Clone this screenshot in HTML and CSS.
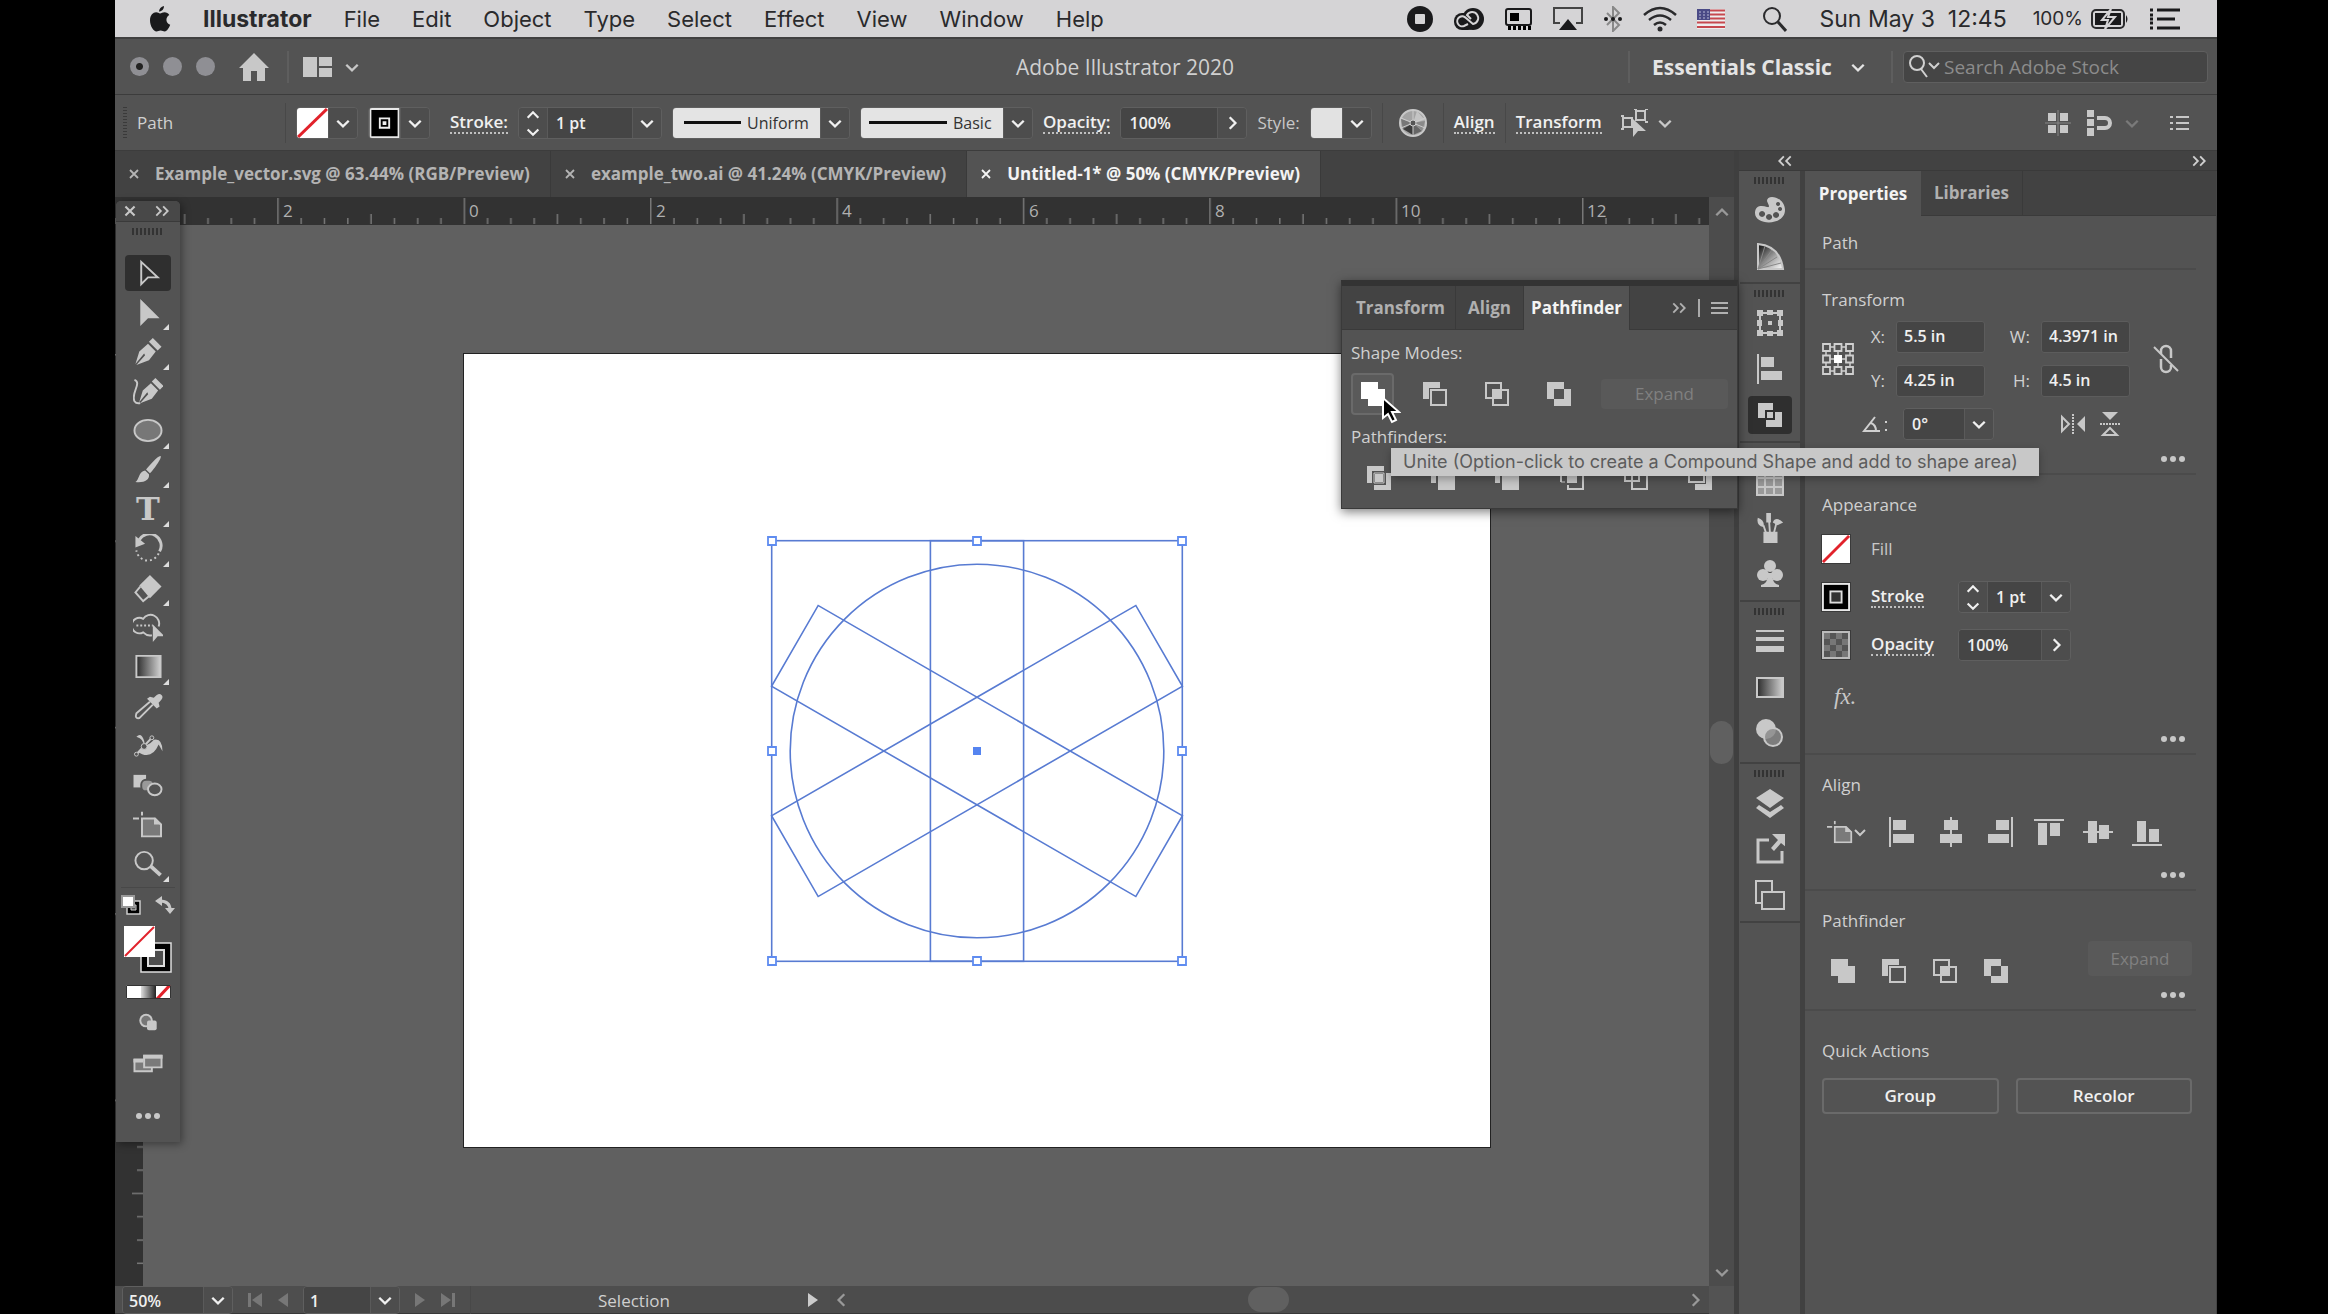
FILE: index.html
```html
<!DOCTYPE html>
<html lang="en">
<head>
<meta charset="utf-8">
<title>Adobe Illustrator 2020</title>
<link rel="stylesheet" href="styles.css">
</head>
<body>
<svg class="sprite" aria-hidden="true">
  <defs>
    <linearGradient id="grad"><stop offset="0" stop-color="#2c2c2c"/><stop offset="1" stop-color="#d0d0d0"/></linearGradient>
    <linearGradient id="grad-rev"><stop offset="0" stop-color="#ddd"/><stop offset="1" stop-color="#222"/></linearGradient>
    <linearGradient id="fan" x1="0" y1="0" x2="1" y2="1"><stop offset=".1" stop-color="#222"/><stop offset=".6" stop-color="#aaa"/><stop offset="1" stop-color="#fff"/></linearGradient>
  </defs>
  <symbol id="down" viewBox="0 0 14 14"><path d="M2 5l5 5 5-5" fill="none" stroke="currentColor" stroke-width="2"/></symbol>
  <symbol id="up" viewBox="0 0 14 14"><path d="M2 9l5-5 5 5" fill="none" stroke="currentColor" stroke-width="2"/></symbol>
  <symbol id="right" viewBox="0 0 14 14"><path d="M5 2l5 5-5 5" fill="none" stroke="currentColor" stroke-width="2"/></symbol>
  <symbol id="left" viewBox="0 0 14 14"><path d="M9 2L4 7l5 5" fill="none" stroke="currentColor" stroke-width="2"/></symbol>
  <symbol id="steps" viewBox="0 0 14 28"><path d="M2 9l5-5 5 5M2 20l5 5 5-5" fill="none" stroke="currentColor" stroke-width="2"/></symbol>
  <symbol id="more-right" viewBox="0 0 14 14"><path d="M2 3l4 4-4 4M8 3l4 4-4 4" fill="none" stroke="currentColor" stroke-width="1.600"/></symbol>
  <symbol id="more-left" viewBox="0 0 14 14"><path d="M6 3L2 7l4 4M12 3L8 7l4 4" fill="none" stroke="currentColor" stroke-width="1.600"/></symbol>
  <symbol id="close" viewBox="0 0 14 14"><path d="M3 3l8 8M11 3l-8 8" fill="none" stroke="currentColor" stroke-width="1.800"/></symbol>
  <symbol id="dots" viewBox="0 0 26 8"><g fill="currentColor"><circle cx="4" cy="4" r="3"/><circle cx="13" cy="4" r="3"/><circle cx="22" cy="4" r="3"/></g></symbol>
  <symbol id="none" viewBox="0 0 30 30"><path fill="#fff" d="M0 0h30v30H0z"/><path d="M1 29L29 1" stroke="#e1222b" stroke-width="3"/></symbol>
  <symbol id="stroke-swatch" viewBox="0 0 30 30"><path fill="#e8e8e8" d="M0 0h30v30H0z"/><path d="M2 2h26v26H2z"/><path d="M8 8h14v14H8z" fill="#ddd"/><path d="M10 10h10v10H10z" fill="#333"/></symbol>
  <symbol id="stroke-mini" viewBox="0 0 32 32"><path fill="#e8e8e8" d="M0 0h32v32H0z"/><path d="M2 2h28v28H2z"/><path d="M11 11h10v10H11z" stroke="#eee" stroke-width="2"/><path d="M14 14h4v4h-4z" fill="#eee"/></symbol>
  <symbol id="pf-unite" viewBox="0 0 24 24"><path fill="currentColor" d="M0 0h17v7h7v17H7v-7H0z"/></symbol>
  <symbol id="pf-minus" viewBox="0 0 24 24"><path fill="currentColor" d="M0 0h17v6H6v11H0z"/><path fill="none" stroke="currentColor" stroke-width="2" d="M8 8h15v15H8z"/></symbol>
  <symbol id="pf-intersect" viewBox="0 0 24 24"><path fill="currentColor" d="M8 8h8v8H8z"/><path fill="none" stroke="currentColor" stroke-width="2" d="M1 1h15v15H1zM8 8h15v15H8z"/></symbol>
  <symbol id="pf-exclude" viewBox="0 0 24 24"><path fill="currentColor" fill-rule="evenodd" d="M0 0h17v7h7v17H7v-7H0zM7 7v10h10V7z"/></symbol>
  <symbol id="pf-divide" viewBox="0 0 24 24"><path fill="currentColor" d="M0 0h17v5H5v12H0z"/><path fill="currentColor" d="M8 8h8v8H8z"/><path fill="currentColor" d="M19 7h5v17H7v-5h12z"/><path d="M7 7h10v10H7z" fill="none" stroke="currentColor"/></symbol>
  <symbol id="pf-trim" viewBox="0 0 24 24"><path fill="currentColor" d="M0 0h17v5H5v12H0zM7 7h17v17H7z"/></symbol>
  <symbol id="pf-crop" viewBox="0 0 24 24"><path fill="currentColor" d="M7 7h10v10H7z"/><path fill="none" stroke="currentColor" stroke-width="2" d="M1 16V1h15M23 8v15H8v-4M19 8h4"/><path fill="none" stroke="currentColor" d="M1 16h4"/></symbol>
  <symbol id="pf-outline" viewBox="0 0 24 24"><path fill="none" stroke="currentColor" stroke-width="2" d="M1 1h14v14H1zM8 8h15v15H8z"/></symbol>
  <symbol id="pf-back" viewBox="0 0 24 24"><path fill="none" stroke="currentColor" stroke-width="2" d="M1 1h15v15H1z"/><path fill="currentColor" d="M18 7h6v17H7v-6h11z"/></symbol>
  <symbol id="artboard" viewBox="0 0 30 26"><path d="M9 7h13l6 6v12H9z" fill="#7a7a7a" stroke="currentColor" stroke-width="2"/><path d="M21 6v7h8z" fill="currentColor"/><path d="M0 7h6M9 0v4" stroke="currentColor" stroke-width="2"/></symbol>
  <symbol id="al-left" viewBox="0 0 30 30"><path fill="currentColor" d="M2 0h2v30H2zM6 3h13v10H6zM6 17h21v9H6z"/></symbol>
  <symbol id="al-center" viewBox="0 0 30 30"><path fill="currentColor" d="M14 0h2v30h-2zM8 3h14v10H8zM4 17h22v9H4z"/></symbol>
  <symbol id="al-right" viewBox="0 0 30 30"><path fill="currentColor" d="M26 0h2v30h-2zM11 3h13v10H11zM3 17h21v9H3z"/></symbol>
  <symbol id="al-top" viewBox="0 0 30 30"><path fill="currentColor" d="M0 2h30v2H0zM4 6h9v22H4zM16 6h10v13H16z"/></symbol>
  <symbol id="al-middle" viewBox="0 0 30 30"><path fill="currentColor" d="M0 14h30v2H0zM5 4h9v22H5zM16 8h10v14H16z"/></symbol>
  <symbol id="al-bottom" viewBox="0 0 30 30"><path fill="currentColor" d="M0 27h30v2H0zM5 4h9v21H5zM17 12h10v13H17z"/></symbol>
  <symbol id="arrow" viewBox="0 0 30 30"><path d="M7 1v28l8-8h12z" fill="currentColor"/></symbol>
  <symbol id="nib" viewBox="0 0 30 30"><path d="M2 28L6 15l9-8 8 8-7 9-13 5 9-10-1-2z" fill="currentColor"/><path d="M16 5l4-4 9 9-4 4z" fill="currentColor"/></symbol>
</svg>

<div class="screen">
  <header class="menubar">
    <svg class="apple" viewBox="0 0 22 26" aria-label="Apple"><path d="M15 0c0 3-2 5.500-5 5.500C10 3 12 .5 15 0zM11 7.500c1.500 0 2.500-1.200 4.500-1.200 2 0 3.800 1 4.800 2.700-4.300 2.600-3.500 8.300.9 9.800-1.200 3.200-3.300 6.700-5.400 6.700-1.700 0-2.300-1-4.200-1s-2.600 1-4.100 1C4.500 25.500 1 20 1 14.500 1 9 4.200 6.300 7.100 6.300c1.900 0 2.900 1.200 3.900 1.200z" fill="#1a1a1c"/></svg>
    <nav class="menus">
      <button class="menu app-name">Illustrator</button><button class="menu">File</button><button class="menu">Edit</button><button class="menu">Object</button><button class="menu">Type</button><button class="menu">Select</button><button class="menu">Effect</button><button class="menu">View</button><button class="menu">Window</button><button class="menu">Help</button>
    </nav>
    <div class="extras">
      <svg width="26" height="26" viewBox="0 0 26 26"><circle cx="13" cy="13" r="13" fill="#1a1a1c"/><rect x="8" y="8" width="10" height="10" rx="1" fill="#d5d4d6"/></svg>
      <svg width="32" height="24" viewBox="0 0 32 24"><rect x="1" y="6" width="22" height="17" rx="8" fill="#1a1a1c"/><circle cx="20" cy="12" r="11" fill="#1a1a1c"/><path d="M15 17l-4 2a5 5 0 1 1 2-8l7 6a6 6 0 1 0-6-9l4 4" fill="none" stroke="#d5d4d6" stroke-width="2"/></svg>
      <svg width="28" height="22" viewBox="0 0 28 22"><rect x="1" y="1" width="25" height="16" rx="2" fill="none" stroke="#1a1a1c" stroke-width="2"/><path d="M5 5h9v8H5zM3 18h3v4H3zM8 18h3v4H8zM13 18h3v4h-3zM18 18h3v4h-3zM23 18h3v4h-3z"/></svg>
      <svg width="30" height="24" viewBox="0 0 30 24"><path d="M7 16H1V1h28v15h-6" fill="none" stroke="#444" stroke-width="2"/><path d="M6 23l9-11 9 11z" fill="#1a1a1c"/></svg>
      <svg width="20" height="26" viewBox="0 0 20 26"><path d="M4 7l12 12-6 6V1l6 6L4 19" fill="none" stroke="#888" stroke-width="2"/><g fill="#1a1a1c"><circle cx="3" cy="13" r="2"/><circle cx="10" cy="13" r="2"/><circle cx="17" cy="13" r="2"/></g></svg>
      <svg width="34" height="26" viewBox="0 0 34 26"><g fill="none" stroke="#2a2a2c" stroke-width="2.500"><path d="M1 9q16-14 32 0M6 14q11-9 22 0M11 19q6-5 12 0"/></g><circle cx="17" cy="23" r="2.500" fill="#2a2a2c"/></svg>
      <svg width="28" height="20" viewBox="0 0 28 20"><path fill="#eee" d="M0 0h28v20H0z"/><path d="M0 1.500h28M0 5.500h28M0 9.500h28M0 13.500h28M0 18h28" stroke="#c6484e" stroke-width="2"/><path fill="#4a4a86" d="M0 0h13v11H0z"/><path d="M2 3h10M2 6h10M2 9h10" stroke="#b9b9d6" stroke-dasharray="2 2"/></svg>
      <svg class="spot" width="26" height="26" viewBox="0 0 26 26"><circle cx="11" cy="10" r="8" fill="none" stroke="#2a2a2c" stroke-width="2"/><path d="M17 16l8 9" stroke="#2a2a2c" stroke-width="3"/></svg>
      <time class="clock">Sun May 3&nbsp; 12:45</time>
      <span class="charge">100%</span>
      <svg class="battery" width="38" height="20" viewBox="0 0 38 20"><rect x="1" y="1" width="32" height="18" rx="4" fill="none" stroke="#2a2a2c" stroke-width="2"/><rect x="4" y="4" width="26" height="12" fill="#1a1a1c"/><path d="M35 6q3 4 0 8z" fill="#1a1a1c"/><path d="M20 0l-9 11h6l-3 9 10-12h-7z" fill="#1a1a1c" stroke="#d5d4d6" stroke-width="2"/></svg>
      <svg width="32" height="24" viewBox="0 0 32 24"><path d="M8 3h23M8 12h18M8 21h23M1 3h3M1 8h3M1 12h3M1 16h3M1 21h3" stroke="#1a1a1c" stroke-width="3"/></svg>
    </div>
  </header>

  <div class="titlebar">
    <div class="title-left">
      <div class="lights"><button class="light edited" aria-label="Close window"></button><button class="light" aria-label="Minimize"></button><button class="light" aria-label="Zoom window"></button></div>
      <button class="icon" aria-label="Home"><svg width="30" height="28" viewBox="0 0 30 28"><path d="M15 0l15 15h-4v13h-8v-10h-6v10H4V15H0z" fill="currentColor"/></svg></button>
      <span class="sep"></span>
      <button class="icon arrange" aria-label="Arrange documents"><svg width="29" height="20" viewBox="0 0 29 20"><path d="M0 0h14v20H0zM16 0h13v9H16zM16 11h13v9H16z" fill="currentColor"/></svg><svg class="chev"><use href="#down"/></svg></button>
    </div>
    <h1 class="title">Adobe Illustrator 2020</h1>
    <div class="title-right">
      <span class="sep"></span>
      <div class="workspace"><select aria-label="Workspace"><option>Essentials Classic</option></select><svg class="chev"><use href="#down"/></svg></div>
      <span class="sep"></span>
      <label class="stock"><svg width="34" height="26" viewBox="0 0 34 26"><circle cx="9" cy="9" r="7" fill="none" stroke="currentColor" stroke-width="2"/><path d="M13 15l6 8M21 9l5 5 5-5" fill="none" stroke="currentColor" stroke-width="2"/></svg><input type="search" placeholder="Search Adobe Stock" aria-label="Search Adobe Stock"></label>
    </div>
  </div>

  <div class="controlbar">
    <span class="vgrip"></span>
    <span class="sel-kind">Path</span>
    <span class="sep dark"></span>
    <div class="combo"><button class="swatch" aria-label="Fill"><svg preserveAspectRatio="none" viewBox="0 0 30 30"><use href="#none"/></svg></button><button class="drop" aria-label="Fill options"><svg class="chev"><use href="#down"/></svg></button></div>
    <div class="combo"><button class="swatch" aria-label="Stroke"><svg viewBox="0 0 32 32"><use href="#stroke-mini"/></svg></button><button class="drop" aria-label="Stroke options"><svg class="chev"><use href="#down"/></svg></button></div>
    <label class="link first" for="stroke-w">Stroke:</label>
    <div class="combo"><button class="drop" aria-label="Step stroke"><svg class="steps"><use href="#steps"/></svg></button><input id="stroke-w" class="w84" value="1 pt"><button class="drop" aria-label="Stroke presets"><svg class="chev"><use href="#down"/></svg></button></div>
    <div class="combo"><select class="profile" aria-label="Width profile"><option>Uniform</option></select><span class="drop"><svg class="chev"><use href="#down"/></svg></span></div>
    <div class="combo"><select class="profile basic" aria-label="Brush"><option>Basic</option></select><span class="drop"><svg class="chev"><use href="#down"/></svg></span></div>
    <label class="link" for="opac">Opacity:</label>
    <div class="combo"><input id="opac" class="w96" value="100%"><button class="drop" aria-label="Opacity slider"><svg class="chev"><use href="#right"/></svg></button></div>
    <span class="plain">Style:</span>
    <div class="combo"><button class="swatch blank" aria-label="Style"></button><button class="drop" aria-label="Style options"><svg class="chev"><use href="#down"/></svg></button></div>
    <span class="sep dark"></span>
    <button class="icon wheel" aria-label="Recolor artwork"><svg width="28" height="28" viewBox="0 0 28 28"><circle cx="14" cy="14" r="13" fill="#a4a4a4" stroke="#c8c8c8" stroke-width="2"/><path d="M14 14L2 10l2 10z" fill="#777"/><path d="M14 14L4 20l10 6z" fill="#3c3c3c"/><path d="M14 14V26l9-4z" fill="#666"/><path d="M14 14l9 8 3-10z" fill="#8a8a8a"/><path d="M14 14l12-3-8-9z" fill="#c4c4c4"/><path d="M14 1v26M2 9l24 10M2 19L26 9" stroke="#ccc"/><circle cx="14" cy="14" r="3" fill="#555" stroke="#ccc"/></svg></button>
    <span class="sep dark"></span>
    <a class="link" href="#align">Align</a>
    <span class="sep dark"></span>
    <a class="link" href="#transform">Transform</a>
    <button class="icon similar" aria-label="Select similar"><svg width="28" height="28" viewBox="0 0 28 28"><path d="M2 9h9v9H2zM15 2h9v9h-9z" fill="none" stroke="currentColor" stroke-width="2"/><path d="M0 7h3M0 20h3M13 0h3M24 0h3M24 13h3" stroke="currentColor" stroke-width="2"/><path d="M12 10v18l5-6h8z" fill="currentColor"/></svg><svg class="chev"><use href="#down"/></svg></button>
    <div class="bar-end">
      <button class="icon" aria-label="Snap to grid"><svg width="26" height="26" viewBox="0 0 26 26"><path d="M3 3h8v8H3zM15 3h8v8h-8zM3 15h8v8H3zM15 15h8v8h-8z" fill="currentColor"/><path d="M13 0v26M0 13h26" stroke="#888"/></svg></button>
      <button class="icon magnet" aria-label="Snap to point"><svg width="25" height="26" viewBox="0 0 25 26"><path d="M0 0h7v7H0zM0 9h7v7H0zM0 18h7v8H0z" fill="currentColor"/><path d="M10 8h8a5 5 0 0 1 0 10h-8" fill="none" stroke="currentColor" stroke-width="4"/></svg><svg class="chev faint"><use href="#down"/></svg></button>
      <button class="icon" aria-label="Panel menu"><svg width="19" height="18" viewBox="0 0 19 18"><path d="M6 3h13M6 9h13M6 15h13M0 3h3M0 9h3M0 15h3" stroke="currentColor" stroke-width="2"/></svg></button>
    </div>
  </div>

  <div class="work">
    <main class="document">
      <div class="tabs" role="tablist">
        <div class="tab"><button class="x" aria-label="Close"><svg><use href="#close"/></svg></button><button role="tab" class="name">Example_vector.svg @ 63.44% (RGB/Preview)</button></div>
        <div class="tab"><button class="x" aria-label="Close"><svg><use href="#close"/></svg></button><button role="tab" class="name">example_two.ai @ 41.24% (CMYK/Preview)</button></div>
        <div class="tab active"><button class="x" aria-label="Close"><svg><use href="#close"/></svg></button><button role="tab" class="name">Untitled-1* @ 50% (CMYK/Preview)</button></div>
      </div>
      <div class="stage">
        <svg class="ruler-x" aria-hidden="true">
          <defs><pattern id="tx" x="348.600" width="186.400" height="28" patternUnits="userSpaceOnUse"><path d="M.75 1v26M24 21v6M47.300 21v6M70.600 21v6M93.900 17v10M117.200 21v6M140.500 21v6M163.800 21v6" stroke="#777" stroke-width="1.500"/></pattern></defs>
          <rect width="100%" height="28" fill="url(#tx)"/>
          <g class="marks"><text x="168" y="20">2</text><text x="354" y="20">0</text><text x="541" y="20">2</text><text x="727" y="20">4</text><text x="914" y="20">6</text><text x="1100" y="20">8</text><text x="1286" y="20">10</text><text x="1472" y="20">12</text></g>
        </svg>
        <div class="canvas-row">
          <svg class="ruler-y" aria-hidden="true">
            <defs><pattern id="ty" y="129" width="28" height="186.400" patternUnits="userSpaceOnUse"><path d="M0 .75h28M22 24h6M22 47.300h6M22 70.600h6M17 93.900h11M22 117.200h6M22 140.500h6M22 163.800h6" stroke="#777" stroke-width="1.500"/></pattern></defs>
            <rect width="28" height="100%" fill="url(#ty)"/>
          </svg>
          <div class="canvas">
            <svg class="artboard" viewBox="0 0 1026 793" role="img" aria-label="Circle crossed by three bars">
              <g fill="none" stroke="#587bd2" stroke-width="1.600" transform="translate(513 397)">
                <rect x="-205.300" y="-210.300" width="410.600" height="420.600"/>
                <circle r="186.800"/>
                <rect x="-46.600" y="-210.300" width="93.200" height="420.600"/>
                <rect x="-46.600" y="-210.300" width="93.200" height="420.600" transform="rotate(60)"/>
                <rect x="-46.600" y="-210.300" width="93.200" height="420.600" transform="rotate(-60)"/>
              </g>
              <path d="M509 393h8v8h-8z" fill="#5584f0"/>
              <g fill="#fff" stroke="#5f8cf0" stroke-width="1.800"><path d="M304 183h8v8h-8zM509 183h8v8h-8zM714 183h8v8h-8zM304 393h8v8h-8zM714 393h8v8h-8zM304 603h8v8h-8zM509 603h8v8h-8zM714 603h8v8h-8z"/></g>
            </svg>
          </div>
        </div>
        <div class="vscroll"><svg class="chev"><use href="#up"/></svg><span class="thumb"></span><svg class="chev"><use href="#down"/></svg></div>
      </div>
      <footer class="status">
        <div class="combo"><input class="w80" aria-label="Zoom" value="50%"><button class="drop" aria-label="Zoom levels"><svg class="chev"><use href="#down"/></svg></button></div>
        <div class="pager"><button class="icon" aria-label="First"><svg width="14" height="14" viewBox="0 0 14 14"><path d="M0 0h3v14H0zM14 0v14L4 7z" fill="currentColor"/></svg></button><button class="icon" aria-label="Previous"><svg width="10" height="14" viewBox="0 0 10 14"><path d="M10 0v14L0 7z" fill="currentColor"/></svg></button></div>
        <div class="combo"><input class="w66" aria-label="Artboard" value="1"><button class="drop" aria-label="Artboards"><svg class="chev"><use href="#down"/></svg></button></div>
        <div class="pager"><button class="icon" aria-label="Next"><svg width="10" height="14" viewBox="0 0 10 14"><path d="M0 0v14l10-7z" fill="currentColor"/></svg></button><button class="icon" aria-label="Last"><svg width="14" height="14" viewBox="0 0 14 14"><path d="M11 0h3v14h-3zM0 0v14l10-7z" fill="currentColor"/></svg></button></div>
        <span class="sep dark"></span>
        <span class="tool-name">Selection</span>
        <svg class="play" width="10" height="14" viewBox="0 0 10 14"><path d="M0 0v14l10-7z" fill="#ccc"/></svg>
        <div class="hscroll"><svg class="chev"><use href="#left"/></svg><span class="thumb"></span><svg class="chev"><use href="#right"/></svg></div>
        <span class="corner"></span>
      </footer>

      <aside class="tools">
        <div class="tools-head"><button class="icon" aria-label="Close"><svg class="chev"><use href="#close"/></svg></button><button class="icon" aria-label="Expand"><svg class="chev"><use href="#more-right"/></svg></button></div>
        <span class="grip"></span>
        <div class="tool-list">
          <button class="tool on" aria-label="Selection"><svg viewBox="0 0 30 30"><path d="M8 3v23l7-7h10z" fill="none" stroke="currentColor" stroke-width="2"/></svg></button>
          <button class="tool sub" aria-label="Direct selection"><svg viewBox="0 0 30 30"><use href="#arrow"/></svg></button>
          <button class="tool sub" aria-label="Pen"><svg viewBox="0 0 30 30"><use href="#nib"/></svg></button>
          <button class="tool" aria-label="Curvature"><svg viewBox="0 0 30 30"><g transform="translate(4 0)"><use href="#nib" width="28" height="28"/></g><path d="M1 3c8 3-4 14 0 22q2 3 6 2" fill="none" stroke="currentColor" stroke-width="2"/></svg></button>
          <button class="tool sub" aria-label="Ellipse"><svg viewBox="0 0 30 30"><ellipse cx="15" cy="15" rx="14" ry="11" fill="#777" stroke="currentColor" stroke-width="2"/></svg></button>
          <button class="tool sub" aria-label="Paintbrush"><svg viewBox="0 0 30 30"><path d="M28 1c2 2-8 15-11 18l-4-4C16 11 26 0 28 1zM12 16l4 4c1 6-5 9-14 8 4-2 3-11 10-12z" fill="currentColor"/></svg></button>
          <button class="tool sub type" aria-label="Type">T</button>
          <button class="tool sub" aria-label="Rotate"><svg viewBox="0 0 30 30"><path d="M6 6a12 12 0 0 1 21 12" fill="none" stroke="currentColor" stroke-width="3"/><path d="M2 2v12l10-4z" fill="currentColor"/><path d="M26 20A12 12 0 0 1 3 17" fill="none" stroke="currentColor" stroke-width="2" stroke-dasharray="2 3"/></svg></button>
          <button class="tool sub" aria-label="Eraser"><svg viewBox="0 0 30 30"><path d="M17 1l12 12-12 12L6 12z" fill="currentColor"/><path d="M7 13l-5 6 8 9 6-5" fill="none" stroke="currentColor" stroke-width="2"/></svg></button>
          <button class="tool" aria-label="Shape builder"><svg viewBox="0 0 30 30"><path d="M26 14A9 9 0 0 0 10 6a8 8 0 1 0 0 14q4 4 9 3" fill="none" stroke="currentColor" stroke-width="2"/><path d="M3 13h17" stroke="currentColor" stroke-width="2" stroke-dasharray="2 2"/><path d="M20 12v18l5-6h7z" fill="currentColor"/></svg></button>
          <button class="tool sub" aria-label="Gradient"><svg viewBox="0 0 30 30"><path d="M3 4h25v22H3z" fill="url(#grad)" stroke="currentColor" stroke-width="2"/></svg></button>
          <button class="tool" aria-label="Eyedropper"><svg viewBox="0 0 30 30"><path d="M17 10L3 22q-2 6 3 5L20 13" fill="none" stroke="currentColor" stroke-width="2"/><path d="M14 7l3-2 4 1q5-6 8-3t-3 8l1 4-3 2z" fill="currentColor"/></svg></button>
          <button class="tool" aria-label="Puppet warp"><svg viewBox="0 0 30 30"><path d="M3 6q5-5 8 4l1 5q6-2 9-6 9-2 9 12l-4-7q-6 14-17 10l-4-2 6-5q0-9-8-11z" fill="currentColor"/><path d="M4 23L18 8" stroke="currentColor" stroke-width="2"/><circle cx="3" cy="24" r="2" fill="#535353" stroke="currentColor"/><circle cx="11" cy="16" r="3" fill="#535353" stroke="currentColor"/><circle cx="19" cy="7" r="2" fill="#535353" stroke="currentColor"/></svg></button>
          <button class="tool" aria-label="Blend"><svg viewBox="0 0 30 30"><path d="M0 4h13v13H0z" fill="currentColor"/><rect x="8" y="9" width="13" height="12" rx="5" fill="#999" stroke="#535353" stroke-width="2"/><ellipse cx="22" cy="19" rx="7" ry="6" fill="#535353" stroke="currentColor" stroke-width="2"/></svg></button>
          <button class="tool" aria-label="Artboard"><svg viewBox="0 0 30 26"><use href="#artboard"/></svg></button>
          <button class="tool sub" aria-label="Zoom"><svg viewBox="0 0 30 30"><circle cx="11" cy="12" r="9" fill="none" stroke="currentColor" stroke-width="2"/><path d="M18 18l10 9" stroke="currentColor" stroke-width="4"/></svg></button>
        </div>
        <div class="paint-head">
          <button class="icon" aria-label="Default fill and stroke"><svg width="20" height="20" viewBox="0 0 20 20"><path d="M6 6h13v13H6z" fill="#000" stroke="#ccc" stroke-width="1.500"/><path d="M10 10h5v5h-5z" fill="#535353" stroke="#ccc"/><path d="M1 1h12v11H1z" fill="#fff" stroke="#999" stroke-width="2"/></svg></button>
          <button class="icon" aria-label="Swap fill and stroke"><svg width="20" height="20" viewBox="0 0 20 20"><path d="M5 6q10 0 10 9" fill="none" stroke="currentColor" stroke-width="3"/><path d="M0 6l7-5v10zM10 13h10l-5 6z" fill="currentColor"/></svg></button>
        </div>
        <svg class="paint" viewBox="0 0 48 48" role="img" aria-label="Fill none, black stroke"><path d="M17 17h30v29H17z" fill="#000" stroke="#ddd" stroke-width="1.500"/><path d="M24 24h16v16H24z" fill="#4d4d4d" stroke="#ddd" stroke-width="2"/><path d="M0 0h31v31H0z" fill="#fff"/><path d="M1 30L30 1" stroke="#e1222b" stroke-width="2"/></svg>
        <svg class="modes" viewBox="0 0 45 14" role="img" aria-label="Color, gradient, none"><path d="M0 0h15v14H0z" fill="#fff"/><path d="M15 0h15v14H15z" fill="url(#grad-rev)"/><path d="M30 0h15v14H30z" fill="#fff"/><path d="M31 14L44 0" stroke="#e1222b" stroke-width="3"/><path d="M.5.500h44v13H.5z" fill="none" stroke="#333"/></svg>
        <button class="tool draw" aria-label="Draw mode"><svg viewBox="0 0 30 30"><circle cx="13" cy="12" r="6" fill="#777" stroke="currentColor" stroke-width="2"/><rect x="14" y="12" width="10" height="10" rx="2" fill="currentColor"/></svg></button>
        <button class="tool" aria-label="Screen mode"><svg viewBox="0 0 30 30"><path d="M1 11h18v12H1z" fill="#7a7a7a" stroke="currentColor" stroke-width="2"/><path d="M0 10h10v4H0z" fill="currentColor"/><path d="M11 7h18v12H11z" fill="#7a7a7a" stroke="currentColor" stroke-width="2"/><path d="M10 6h20v4H10z" fill="currentColor"/></svg></button>
        <button class="icon edit" aria-label="Edit toolbar"><svg class="more"><use href="#dots"/></svg></button>
      </aside>

      <section class="pathfinder">
        <div class="pf-tabs"><button class="pf-tab">Transform</button><button class="pf-tab">Align</button><button class="pf-tab active">Pathfinder</button>
          <div class="pf-ctl"><svg class="chev"><use href="#more-right"/></svg><span class="bar"></span><svg width="17" height="14" viewBox="0 0 17 14"><path d="M0 2h17M0 7h17M0 12h17" stroke="currentColor" stroke-width="2"/></svg></div>
        </div>
        <h2 class="pf-title">Shape Modes:</h2>
        <div class="modes-row">
          <button class="mode hover" aria-label="Unite"><svg><use href="#pf-unite"/></svg></button><button class="mode" aria-label="Minus front"><svg><use href="#pf-minus"/></svg></button><button class="mode" aria-label="Intersect"><svg><use href="#pf-intersect"/></svg></button><button class="mode" aria-label="Exclude"><svg><use href="#pf-exclude"/></svg></button>
          <button class="expand" disabled>Expand</button>
        </div>
        <h2 class="pf-title">Pathfinders:</h2>
        <div class="finders-row"><button aria-label="Divide"><svg><use href="#pf-divide"/></svg></button><button aria-label="Trim"><svg><use href="#pf-trim"/></svg></button><button aria-label="Merge"><svg><use href="#pf-trim"/></svg></button><button aria-label="Crop"><svg><use href="#pf-crop"/></svg></button><button aria-label="Outline"><svg><use href="#pf-outline"/></svg></button><button aria-label="Minus back"><svg><use href="#pf-back"/></svg></button></div>
        <div class="tooltip" role="tooltip">Unite (Option-click to create a Compound Shape and add to shape area)</div>
        <svg class="cursor" viewBox="0 0 20 28" aria-hidden="true"><path d="M2 2v20l5-4 4 8 4-2-4-8h7z" fill="#000" stroke="#fff" stroke-width="2"/></svg>
      </section>
    </main>

    <div class="dock">
      <div class="dock-head"><svg class="chev"><use href="#more-left"/></svg><svg class="chev"><use href="#more-right"/></svg></div>
      <div class="dock-body">
        <div class="rail">
          <div class="rail-group"><span class="grip"></span>
            <button aria-label="Color"><svg viewBox="0 0 30 28"><path fill-rule="evenodd" d="M12 5c0-8 18-4 18 9 0 16-30 16-30 3C0 9 7 9 12 11c4 1 1-3 0-6zM7 15a3 3 0 1 0 .1 0zM14 18a3 3 0 1 0 .1 0zM21 16a3 3 0 1 0 .1 0zM25 11a2 2 0 1 0 .1 0zM23 6a2 2 0 1 0 .1 0z" fill="currentColor"/></svg></button>
            <button aria-label="Color guide"><svg viewBox="0 0 30 30"><path d="M3 28V3q22 2 25 25z" fill="url(#fan)" stroke="currentColor" stroke-width="2"/><path d="M3 28L10 5M3 28L17 9M3 28l19-12M3 28l23-6" stroke="#888"/></svg></button>
          </div>
          <div class="rail-group"><span class="grip"></span>
            <button aria-label="Transform"><svg viewBox="0 0 30 30"><path d="M5 5h20v20H5z" fill="none" stroke="currentColor" stroke-width="2"/><path d="M2 2h6v6H2zM12 2h6v5h-6zM22 2h6v6h-6zM2 12h5v6H2zM23 12h5v6h-5zM2 22h6v6H2zM12 23h6v5h-6zM22 22h6v6h-6zM13 13h4v4h-4z" fill="currentColor"/></svg></button>
            <button aria-label="Align"><svg viewBox="0 0 30 30"><use href="#al-left"/></svg></button>
            <button class="on" aria-label="Pathfinder"><svg viewBox="-3 -3 30 30"><path fill="currentColor" d="M0 0h15v7H7v8H0z"/><path fill="currentColor" d="M9 9h6v6H9zM17 9h7v15H8v-7h9z"/></svg></button>
          </div>
          <div class="rail-group"><span class="grip"></span>
            <button aria-label="Swatches"><svg viewBox="0 0 30 30"><path d="M2 2h26v26H2z" fill="#999" stroke="currentColor" stroke-width="2"/><path d="M10 2v26M19 2v26M2 11h26M2 20h26" stroke="currentColor" stroke-width="2"/></svg></button>
            <button aria-label="Brushes"><svg viewBox="0 0 30 32"><path d="M8 20h15v12H8zM2 5q8 3 6 10-8-2-6-10zM11 0h5v10h-5zM18 10q3-7 11 0l-6 3z" fill="currentColor"/><path d="M8 13l3 9M14 8l1 14M22 10l-3 12" stroke="currentColor" stroke-width="2"/></svg></button>
            <button aria-label="Symbols"><svg viewBox="0 0 30 30"><g fill="currentColor"><circle cx="15" cy="7" r="6"/><circle cx="8" cy="16" r="6"/><circle cx="22" cy="16" r="6"/><path d="M13 14h4q0 11 7 12v2H6v-2q7-1 7-12z"/></g></svg></button>
          </div>
          <div class="rail-group tall"><span class="grip"></span>
            <button aria-label="Stroke"><svg viewBox="0 0 30 30"><path d="M1 4h28v2H1zM1 11h28v4H1zM1 20h28v6H1z" fill="currentColor"/></svg></button>
            <button aria-label="Gradient"><svg viewBox="0 0 30 30"><path d="M2 6h26v19H2z" fill="url(#grad)" stroke="currentColor" stroke-width="2"/></svg></button>
            <button aria-label="Transparency"><svg viewBox="0 0 30 30"><circle cx="11" cy="11" r="10" fill="currentColor"/><circle cx="18" cy="19" r="9" fill="#888" fill-opacity=".8" stroke="currentColor" stroke-width="2"/></svg></button>
          </div>
          <div class="rail-group"><span class="grip"></span>
            <button aria-label="Layers"><svg viewBox="0 0 30 30"><path d="M15 1l14 9-14 10L1 10zM4 17l11 7 11-7 3 3-14 10L1 20z" fill="currentColor"/></svg></button>
            <button aria-label="Asset export"><svg viewBox="0 0 30 30"><path d="M14 6H3v22h24V17" fill="none" stroke="currentColor" stroke-width="3"/><path d="M17 0h14v13l-5-4-7 8-3-3 7-8z" fill="currentColor"/></svg></button>
            <button aria-label="Artboards"><svg viewBox="0 0 30 30"><path d="M7 23H1V1h16v10" fill="none" stroke="currentColor" stroke-width="2"/><path d="M7 12h22v17H7z" fill="none" stroke="currentColor" stroke-width="2"/></svg></button>
          </div>
        </div>
        <section class="properties">
          <div class="p-tabs"><button class="p-tab active">Properties</button><button class="p-tab">Libraries</button></div>
          <div class="block kind"><h2>Path</h2></div>
          <div class="block xform-block" id="transform"><h2>Transform</h2>
            <div class="xform">
              <svg class="origin" viewBox="0 0 32 32" role="img" aria-label="Reference point"><path d="M4 4h24v24H4zM16 4v24M4 16h24" fill="none" stroke="currentColor" stroke-width="1.500"/><g fill="#535353" stroke="currentColor" stroke-width="1.800"><path d="M1 1h7v7H1zM12.500 1h7v7h-7zM24 1h7v7h-7zM1 12.500h7v7H1zM24 12.500h7v7h-7zM1 24h7v7H1zM12.500 24h7v7h-7zM24 24h7v7h-7z"/></g><path d="M12 12h8v8h-8z" fill="#fff"/></svg>
              <label for="px">X:</label><input id="px" value="5.5 in"><label for="pw">W:</label><input id="pw" value="4.3971 in">
              <label for="py">Y:</label><input id="py" value="4.25 in"><label for="ph">H:</label><input id="ph" value="4.5 in">
              <button class="icon chain" aria-label="Constrain proportions"><svg width="26" height="30" viewBox="0 0 26 30"><path d="M8 10V7a5 5 0 0 1 10 0v7M18 21v2a5 5 0 0 1-10 0v-8" fill="none" stroke="currentColor" stroke-width="2.500"/><path d="M1 3l24 24" stroke="currentColor" stroke-width="2"/></svg></button>
            </div>
            <div class="rotate-row"><label for="ang"><svg width="26" height="18" viewBox="0 0 26 18"><path d="M18 16H2L13 2M9 8q5 2 5 8" fill="none" stroke="currentColor" stroke-width="2"/><path d="M23 6h2v2h-2zM23 14h2v2h-2z" fill="currentColor"/></svg></label>
              <div class="combo"><input id="ang" class="w60" value="0°"><button class="drop" aria-label="Angles"><svg class="chev"><use href="#down"/></svg></button></div>
              <button class="icon flip" aria-label="Flip horizontal"><svg width="24" height="20" viewBox="0 0 24 20"><path d="M1 3l7 7-7 7z" fill="none" stroke="currentColor" stroke-width="2"/><path d="M24 2v16l-8-8z" fill="currentColor"/><path d="M12 0v20" stroke="currentColor" stroke-width="2" stroke-dasharray="2 1"/></svg></button>
              <button class="icon" aria-label="Flip vertical"><svg width="20" height="24" viewBox="0 0 20 24"><path d="M2 0h16l-8 8z" fill="currentColor"/><path d="M3 23l7-7 7 7z" fill="none" stroke="currentColor" stroke-width="2"/><path d="M0 12h20" stroke="currentColor" stroke-width="2" stroke-dasharray="2 1"/></svg></button></div>
            <button class="icon more-btn" aria-label="More transform options"><svg class="more"><use href="#dots"/></svg></button>
          </div>
          <div class="block"><h2>Appearance</h2>
            <div class="look"><svg class="sw"><use href="#none"/></svg><span class="plain">Fill</span></div>
            <div class="look"><svg class="sw"><use href="#stroke-swatch"/></svg><label class="link" for="sw2">Stroke</label><div class="combo"><button class="drop" aria-label="Step stroke"><svg class="steps"><use href="#steps"/></svg></button><input id="sw2" value="1 pt"><button class="drop" aria-label="Stroke presets"><svg class="chev"><use href="#down"/></svg></button></div></div>
            <div class="look"><svg class="sw" viewBox="0 0 28 28"><path d="M1 1h26v26H1z" fill="#555" stroke="#bbb" stroke-width="2"/><path d="M2 2h6v6H2zM14 2h6v6h-6zM8 8h6v6H8zM20 8h6v6h-6zM2 14h6v6H2zM14 14h6v6h-6zM8 20h6v6H8zM20 20h6v6h-6z" fill="#777"/></svg><label class="link" for="op2">Opacity</label><div class="combo"><input id="op2" value="100%"><button class="drop" aria-label="Opacity slider"><svg class="chev"><use href="#right"/></svg></button></div></div>
            <button class="fx" aria-label="Effects">fx.</button>
            <button class="icon more-btn" aria-label="More appearance options"><svg class="more"><use href="#dots"/></svg></button>
          </div>
          <div class="block" id="align"><h2>Align</h2>
            <div class="aligns"><button class="icon align-to" aria-label="Align to artboard"><svg width="26" height="26" viewBox="0 0 30 26"><use href="#artboard"/></svg><svg class="chev"><use href="#down"/></svg></button>
              <button aria-label="Left"><svg><use href="#al-left"/></svg></button><button aria-label="Center"><svg><use href="#al-center"/></svg></button><button aria-label="Right"><svg><use href="#al-right"/></svg></button><button aria-label="Top"><svg><use href="#al-top"/></svg></button><button aria-label="Middle"><svg><use href="#al-middle"/></svg></button><button aria-label="Bottom"><svg><use href="#al-bottom"/></svg></button></div>
            <button class="icon more-btn" aria-label="More align options"><svg class="more"><use href="#dots"/></svg></button>
          </div>
          <div class="block finds-block"><h2>Pathfinder</h2>
            <div class="finds"><button aria-label="Unite"><svg><use href="#pf-unite"/></svg></button><button aria-label="Minus front"><svg><use href="#pf-minus"/></svg></button><button aria-label="Intersect"><svg><use href="#pf-intersect"/></svg></button><button aria-label="Exclude"><svg><use href="#pf-exclude"/></svg></button><button class="expand" disabled>Expand</button></div>
            <button class="icon more-btn" aria-label="More pathfinder options"><svg class="more"><use href="#dots"/></svg></button>
          </div>
          <div class="block quick"><h2>Quick Actions</h2>
            <div class="actions"><button>Group</button><button>Recolor</button></div>
          </div>
        </section>
      </div>
    </div>
  </div>
</div>
</body>
</html>
```
FILE: styles.css
```css
* { box-sizing: border-box; }
html, body { height: 100%; }
body {
  margin: 0;
  padding: 0 111px 0 115px;
  background: #000;
  color: #d0d0d0;
  font: 500 17px/20px "Open Sans", "Noto Sans", sans-serif;
  overflow: hidden;
}
button, input, select { font: inherit; color: inherit; margin: 0; padding: 0; border: 0; border-radius: 0; background: none; outline: 0; appearance: none; }
input { min-width: 0; }
h1, h2 { margin: 0; font: inherit; }
svg { display: block; flex: none; }
a { color: inherit; text-decoration: none; }
.sprite { position: absolute; width: 0; height: 0; }
.chev { width: 16px; height: 16px; }
.steps { width: 16px; height: 30px; }
.more { width: 26px; height: 8px; }
.icon { display: flex; align-items: center; color: #c8c8c8; }
.sep { width: 2px; height: 32px; background: #5e5e5e; }
.sep.dark { width: 1px; height: 40px; background: #484848; }

.screen { height: 100%; display: flex; flex-direction: column; background: #535353; }

/* macOS menu bar */
.menubar { height: 37px; flex: none; display: flex; align-items: center; padding: 0 36px 0 34px; background: #d5d4d6; color: #2a2a2c; font: 400 22px/36px Inter, "Liberation Sans", sans-serif; }
.apple { width: 22px; height: 26px; }
.menus { display: flex; gap: 32px; margin-left: 32px; }
.app-name { font-size: 23px; font-weight: 700; }
.extras { display: flex; align-items: center; gap: 20px; margin-left: auto; }
.spot { margin-left: 16px; }
.clock { margin-left: 12px; font-size: 23px; }
.charge { font-size: 19px; margin-left: 6px; }
.battery { margin-left: -12px; }

/* window title bar */
.titlebar { height: 58px; flex: none; display: grid; grid-template-columns: 1fr auto 1fr; align-items: center; padding: 0 9px 0 15px; border-top: 2px solid #404040; border-bottom: 1px solid #3c3c3c; }
.title-left, .title-right { display: flex; align-items: center; gap: 18px; }
.title-right { justify-content: flex-end; }
.lights { display: flex; gap: 14px; }
.light { width: 19px; height: 19px; border-radius: 50%; background: #8f8f94; }
.edited { background: radial-gradient(circle, #222 3px, #8f8f94 4px); }
.title-left > .icon { margin-left: 6px; }
.title-left > .arrange { gap: 12px; margin-left: -4px; }
.title { margin-right: 88px; font-size: 21px; line-height: 28px; color: #d0d0d0; }
.workspace { display: flex; align-items: center; gap: 10px; margin: 0 7px 0 4px; color: #e4e4e4; font-size: 21px; font-weight: 700; line-height: 28px; }
.workspace select { width: 188px; }
.stock { display: flex; align-items: center; width: 305px; height: 32px; padding: 0 4px; gap: 2px; margin-left: -8px; background: #454545; border: 1px solid #5f5f5f; border-radius: 4px; }
.stock input { flex: 1; font-size: 19px; }
.stock input::placeholder { color: #8c8c8c; opacity: 1; }

/* control bar */
.controlbar { height: 56px; flex: none; display: flex; align-items: center; gap: 10px; padding: 0 28px 0 8px; border-bottom: 1px solid #3c3c3c; }
.vgrip { width: 4px; height: 32px; background: repeating-linear-gradient(#3a3a3a 0 1px, #535353 1px 3px); }
.sel-kind { width: 138px; }
.combo { display: flex; height: 32px; border: 1px solid #5f5f5f; border-radius: 4px; overflow: hidden; color: #f0f0f0; }
.combo input { padding: 0 0 0 8px; background: #454545; font-size: 16px; font-weight: 600; }
.drop { width: 29px; display: flex; align-items: center; justify-content: center; background: #4d4d4d; border-left: 1px solid #5a5a5a; }
.drop:first-child { border-left: 0; border-right: 1px solid #5a5a5a; }
.swatch { width: 31px; }
.swatch svg { width: 100%; height: 100%; }
.blank { background: #e2e2e2; }
.w60 { width: 60px; }
.w66 { width: 66px; }
.w80 { width: 80px; }
.w84 { width: 84px; }
.w96 { width: 96px; }
.link { color: #f0f0f0; border-bottom: 2px dotted #c0c0c0; font-weight: 600; }
.first { margin-left: 10px; }
.profile { width: 147px; padding-left: 74px; color: #333; font-size: 16px; background: linear-gradient(#111, #111) 11px 50% / 57px 3px no-repeat, #e4e4e4; }
.basic { width: 142px; padding-left: 92px; background-size: 78px 3px, auto; background-position: 8px 50%, 0 0; }
.plain { color: #c8c8c8; }
.wheel { margin: 0 6px; }
.similar { gap: 8px; margin-left: 9px; }
.bar-end { display: flex; align-items: center; gap: 16px; margin-left: auto; }
.magnet { gap: 12px; margin-right: 14px; }
.faint { color: #7a7a7a; }

/* document column */
.work { flex: 1; min-height: 0; display: flex; }
.document { flex: 1; min-width: 0; display: flex; flex-direction: column; position: relative; border-right: 5px solid #3f3f3f; }
.tabs { height: 46px; flex: none; display: flex; background: #424242; }
.tab { display: flex; align-items: center; gap: 14px; padding: 0 20px 0 12px; border-right: 1px solid #3a3a3a; color: #b4b4b4; }
.tab.active { background: #535353; color: #f4f4f4; }
.tab .name { font-weight: 700; }
.x svg { width: 14px; height: 14px; }
.stage { flex: 1; min-height: 0; display: grid; grid-template: 28px 1fr / 1fr 25px; }
.ruler-x { width: 100%; height: 28px; background: #323232; }
.marks { fill: #b0b0b0; font-weight: 400; }
.canvas-row { grid-row: 2; display: flex; min-height: 0; }
.ruler-y { width: 28px; height: 100%; background: #323232; }
.canvas { flex: 1; position: relative; background: #606060; overflow: hidden; }
.artboard { position: absolute; left: 321px; top: 129px; width: 1026px; height: 793px; background: #fff; outline: 1px solid #222; }
.vscroll { grid-area: 1 / 2 / 3 / 3; display: flex; flex-direction: column; align-items: center; justify-content: space-between; padding: 8px 0 6px; background: #4c4c4c; color: #999; }
.vscroll .thumb { width: 23px; height: 43px; border-radius: 12px; background: #606060; }
.status { height: 28px; flex: none; display: flex; align-items: center; background: #4e4e4e; border-bottom: 1px solid #383838; padding-left: 7px; }
.status .combo { height: 28px; }
.status .combo input { padding: 3px 0 0 6px; }
.pager { display: flex; gap: 16px; padding: 0 15px; }
.pager .icon { color: #777; }
.tool-name { margin-left: 127px; padding-top: 3px; }
.play { margin-left: 138px; }
.hscroll { flex: 1; align-self: stretch; display: flex; align-items: center; justify-content: space-between; margin-left: 12px; padding: 0 6px 0 4px; background: #4c4c4c; color: #999; }
.hscroll .thumb { width: 41px; height: 25px; border-radius: 13px; background: #606060; }
.corner { width: 25px; height: 28px; background: #535353; }

/* floating toolbar */
.tools { position: absolute; left: 1px; top: 50px; width: 64px; height: 941px; display: flex; flex-direction: column; align-items: center; background: #535353; border-radius: 5px 5px 0 0; box-shadow: 2px 2px 8px rgba(0, 0, 0, .4); }
.tools-head { align-self: stretch; height: 21px; display: flex; align-items: center; justify-content: space-between; padding: 0 10px 0 6px; background: #484848; border-bottom: 1px solid #3a3a3a; border-radius: 5px 5px 0 0; }
.grip { width: 32px; height: 7px; background: repeating-linear-gradient(90deg, #333 0 2px, #535353 2px 4px); }
.tools > .grip { margin: 6px 0 20px; }
.tool-list { height: 627px; display: flex; flex-direction: column; justify-content: space-between; }
.tool { position: relative; width: 46px; height: 36px; display: flex; align-items: center; justify-content: center; color: #c8c8c8; }
.tool svg { width: 30px; height: 29px; }
.on { background: #2f2f2f; border-radius: 4px; }
.sub::after { content: ""; position: absolute; right: 2px; bottom: 0; border: 3px solid; border-color: transparent #ddd #ddd transparent; }
.type { font: 700 32px/36px "DejaVu Serif", serif; }
.paint-head { width: 54px; display: flex; justify-content: space-between; padding-top: 7px; margin-top: 5px; border-top: 1px solid #484848; }
.paint { width: 48px; height: 48px; margin-top: 11px; }
.modes { width: 45px; height: 14px; margin-top: 11px; }
.draw { margin: 6px 0 4px; }
.edit { margin-top: 31px; }

/* floating Pathfinder panel */
.pathfinder { position: absolute; right: -4px; top: 129px; width: 397px; height: 229px; z-index: 2; background: #535353; border: 1px solid #3a3a3a; border-top: 6px solid #333; box-shadow: 0 3px 10px rgba(0, 0, 0, .5); }
.pf-tabs { display: flex; height: 44px; background: #434343; font-weight: 700; color: #b0b0b0; }
.pf-tab { width: 106px; border-right: 1px solid #3a3a3a; border-bottom: 1px solid #3a3a3a; }
.pf-tab:first-child { width: 114px; padding-left: 4px; }
.pf-tab:nth-child(2) { width: 68px; }
.pf-tab.active { background: #535353; color: #f4f4f4; border-bottom: 0; }
.pf-ctl { flex: 1; display: flex; align-items: center; justify-content: flex-end; gap: 11px; padding-right: 9px; border-bottom: 1px solid #3a3a3a; }
.pf-ctl .bar { width: 2px; height: 18px; background: #aaa; }
.pf-title { padding: 13px 0 0 9px; }
.modes-row { display: flex; align-items: center; gap: 19px; padding: 10px 9px 0; color: #c8c8c8; }
.mode { width: 43px; height: 42px; display: flex; align-items: center; justify-content: center; border-radius: 4px; }
.mode svg, .finders-row svg, .finds svg { width: 24px; height: 24px; }
.mode.hover { color: #fff; background: #5a5a5a; border: 2px solid #6a6a6a; }
.expand { color: #808080; background: #595959; border-radius: 4px; }
.modes-row .expand { flex: 1; height: 30px; margin-left: 2px; }
.modes-row + .pf-title { padding-top: 12px; }
.finders-row { display: flex; justify-content: space-between; padding: 19px 25px 0; color: #c8c8c8; }
.tooltip { position: absolute; left: 49px; top: 162px; min-width: 648px; height: 28px; padding: 0 12px; white-space: nowrap; color: #5c5c5c; background: #c8c8c8; box-shadow: 0 3px 8px rgba(0, 0, 0, .3); font: 400 18px/27px Inter, "Liberation Sans", sans-serif; }
.cursor { position: absolute; left: 39px; top: 110px; width: 20px; height: 28px; }

/* panel dock */
.dock { width: 478px; flex: none; display: flex; flex-direction: column; }
.dock-head { height: 20px; display: flex; align-items: center; justify-content: space-between; padding: 0 10px 0 38px; background: #424242; border-bottom: 1px solid #3a3a3a; }
.dock-body { flex: 1; display: flex; min-height: 0; }
.rail { width: 66px; padding-left: 1px; border-right: 5px solid #414141; }
.rail-group { display: flex; flex-direction: column; align-items: center; padding: 6px 0 7px; border-bottom: 2px solid #424242; color: #c8c8c8; }
.rail-group button { width: 44px; height: 38px; margin-bottom: 8px; display: flex; align-items: center; justify-content: center; }
.rail-group button:last-child { margin-bottom: 0; }
.rail-group .grip { margin-bottom: 7px; }
.rail-group svg { width: 30px; height: 30px; }
.tall { padding-bottom: 10px; }
.properties { flex: 1; min-width: 0; border-right: 1px solid #454545; }
.p-tabs { display: flex; height: 45px; background: #424242; font-weight: 700; color: #b0b0b0; }
.p-tab { width: 102px; border-right: 1px solid #3a3a3a; border-bottom: 1px solid #3a3a3a; }
.p-tab.active { width: 116px; background: #535353; color: #f4f4f4; border: 0; }
.p-tabs::after { content: ""; flex: 1; border-bottom: 1px solid #3a3a3a; }
.block { margin-right: 20px; padding: 20px 4px 10px 17px; border-bottom: 2px solid #4b4b4b; }
.block.kind { padding: 17px 17px 15px; }
.xform { display: grid; grid-template-columns: 32px 42px 89px 56px 89px 1fr; row-gap: 12px; align-items: center; margin-top: 11px; }
.xform input { height: 32px; padding: 0 0 2px 7px; background: #454545; border: 1px solid #5c5c5c; border-radius: 3px; color: #f0f0f0; font-size: 16px; font-weight: 600; }
.xform label { text-align: right; padding-right: 11px; }
.origin { grid-row: 1 / 3; width: 32px; height: 32px; }
.chain { grid-area: 1 / 6 / 3 / 7; justify-self: center; margin-left: 10px; }
.rotate-row { display: flex; align-items: center; margin: 11px 0 0 40px; gap: 15px; }
.flip { margin-left: 52px; }
.more-btn { margin: 24px 6px 0 auto; }
.xform-block .more-btn { margin-top: 15px; }
.finds-block .more-btn { margin-top: 8px; }
.look { display: grid; grid-template-columns: 49px 87px auto; justify-content: start; align-items: center; height: 48px; }
.look:nth-child(2) { margin-top: 10px; }
.look .combo { width: 113px; }
.look .combo input { flex: 1; width: 0; }
.look .link, .look .plain { justify-self: start; }
.sw { width: 28px; height: 28px; outline: 1px solid #3a3a3a; }
.fx { display: block; margin: 14px 0 0 12px; font: italic 400 23px/28px "Liberation Serif", serif; color: #c8c8c8; }
.aligns { display: flex; gap: 19px; margin-top: 22px; color: #c8c8c8; }
.aligns svg { width: 30px; height: 30px; }
.aligns .align-to { margin: 0 1px 0 5px; }
.align-to svg { width: 26px; height: 26px; }
.align-to .chev { width: 14px; height: 14px; }
.finds { display: flex; gap: 27px; margin-top: 10px; align-items: flex-start; padding-left: 9px; color: #c8c8c8; }
.finds .expand { width: 104px; height: 35px; margin-left: auto; }
.finds button:not(.expand) { padding-top: 18px; }
.quick { border: 0; padding-top: 30px; }
.actions { display: grid; grid-template-columns: 1fr 1fr; gap: 17px; margin-top: 17px; }
.actions button { height: 36px; border: 2px solid #6a6a6a; border-radius: 4px; color: #f0f0f0; font-weight: 600; }
```
